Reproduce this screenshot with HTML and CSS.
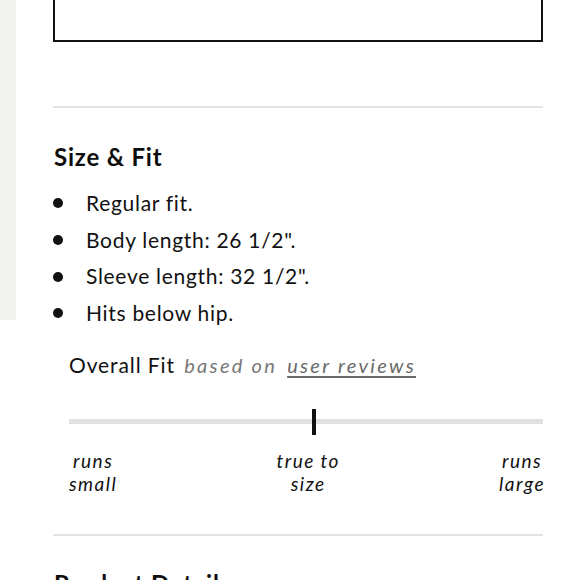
FILE: index.html
```html
<!DOCTYPE html>
<html lang="en">
<head>
<meta charset="utf-8">
<title>Size &amp; Fit</title>
<link rel="stylesheet" href="styles.css">
</head>
<body>
<div class="page">
  <aside class="rail"></aside>
  <main class="content">
    <div class="box"></div>
    <hr class="divider divider-top">
    <section class="size-fit">
      <h2 class="heading">Size &amp; Fit</h2>
      <ul class="facts">
        <li class="fact">Regular fit.</li>
        <li class="fact">Body length: 26 1/2".</li>
        <li class="fact">Sleeve length: 32 1/2".</li>
        <li class="fact">Hits below hip.</li>
      </ul>
      <div class="fit">
        <p class="fit-title">Overall Fit <span class="fit-note">based on <a class="fit-link" href="#">user reviews</a></span></p>
        <div class="scale">
          <div class="track"></div>
          <div class="marker" style="left: 51.3%"></div>
        </div>
        <div class="scale-labels">
          <span class="scale-label">runs<br>small</span>
          <span class="scale-label">true to<br>size</span>
          <span class="scale-label">runs<br>large</span>
        </div>
      </div>
    </section>
    <hr class="divider divider-bottom">
    <h2 class="heading heading-next">Product Details</h2>
  </main>
</div>
</body>
</html>
```

FILE: styles.css
```css
* { box-sizing: border-box; }

html, body {
  margin: 0;
  padding: 0;
  background: #ffffff;
  overflow: hidden;
}

body {
  font-family: "Lato", "Open Sans", sans-serif;
  color: #111111;
}

.page {
  display: flex;
  align-items: flex-start;
  height: 580px;
}

.rail {
  flex: 0 0 16px;
  height: 320px;
  background: #f2f2f0;
}

.content {
  width: 490px;
  margin-left: 37px;
}

.box {
  height: 42px;
  border: 2px solid #111111;
  border-top: 0;
}

.divider {
  margin: 0;
  border: 0;
  height: 2px;
  background: #e3e3e3;
}

.divider-top { margin-top: 64px; }
.divider-bottom { margin-top: 39px; }

.heading {
  margin: 34px 0 0 1px;
  font-size: 24px;
  line-height: 30px;
  font-weight: 700;
  letter-spacing: 0.8px;
  color: #0d0d0d;
}

.heading-next { margin-top: 33px; }

.facts {
  list-style: none;
  margin: 13px 0 0;
  padding: 0;
}

.fact {
  display: flex;
  align-items: center;
  gap: 23px;
  font-size: 21px;
  line-height: 36.7px;
  letter-spacing: 0.7px;
}

.fact::before {
  content: "";
  flex: 0 0 10px;
  height: 10px;
  border-radius: 50%;
  background: #111111;
}

.fit {
  margin: 21px 0 0 16px;
}

.fit-title {
  margin: 0;
  font-size: 21px;
  line-height: 24px;
  letter-spacing: 0.9px;
}

.fit-note {
  margin-left: 3px;
  font-size: 20px;
  font-style: italic;
  color: #777777;
  letter-spacing: 2.3px;
}

.fit-link {
  margin-left: 3px;
  color: #6a6a6a;
  text-decoration: underline;
  text-underline-offset: 3px;
}

.scale {
  position: relative;
  height: 26px;
  margin-top: 32px;
  display: flex;
  align-items: center;
}

.track {
  flex: 1;
  height: 5px;
  background: #e0e0e0;
}

.marker {
  position: absolute;
  top: 0;
  width: 4px;
  height: 26px;
  background: #111111;
}

.scale-labels {
  display: flex;
  justify-content: space-between;
  margin-top: 15px;
  margin-right: -2px;
}

.scale-label {
  font-size: 19px;
  line-height: 22.8px;
  font-style: italic;
  text-align: center;
  letter-spacing: 1.5px;
  color: #111111;
}
```
